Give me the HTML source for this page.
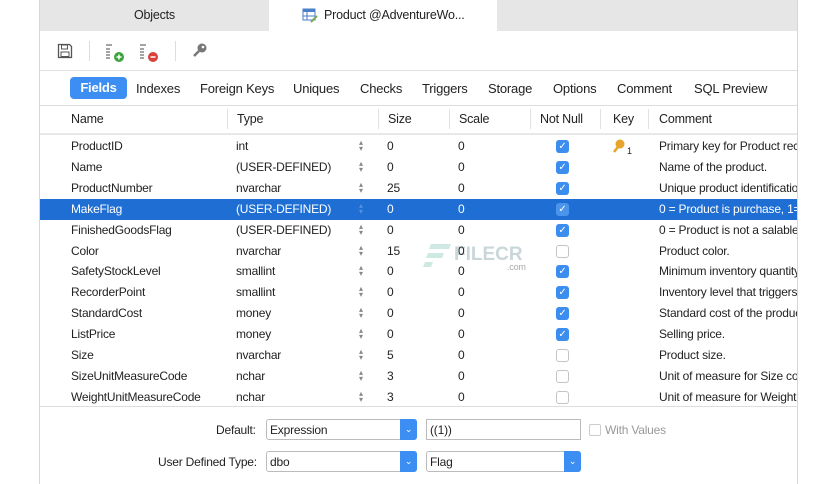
<!DOCTYPE html>
<html><head><meta charset="utf-8"><style>
*{margin:0;padding:0;box-sizing:border-box}
body{width:836px;height:484px;background:#fff;font-family:"Liberation Sans",sans-serif;font-size:12px;color:#222;position:relative;overflow:hidden;letter-spacing:-0.2px}
.a{position:absolute}
.win{position:absolute;left:39px;top:0;width:759px;height:484px;border-left:1px solid #d6d6d6;border-right:1px solid #d6d6d6;overflow:hidden}
.row{position:absolute;left:0;width:758px;height:21px}
.row span{position:absolute;top:3px;white-space:nowrap}
.sel{background:#1f6ed4;color:#fff}
.cb{position:absolute;left:516px;top:4px;width:13px;height:13px;border-radius:3px;background:#3b8df0;color:#fff;font-size:10px;line-height:13px;text-align:center}
.cb.e{background:#fff;border:1px solid #c4c4c4}
.sel .cb{background:#4a94ec}
.st{position:absolute;left:319px;top:4px;font-size:8px;line-height:6px;color:#888}
.sel .st{color:#5a8fd8}
.hd span{position:absolute;top:7px}
.sep{position:absolute;top:4px;width:1px;height:20px;background:#e2e2e2}
.sub span{position:absolute;top:10px;font-size:13px}
.sel2{border:1px solid #bbb;border-radius:3px;height:21px;background:#fff;position:absolute}
.dd{position:absolute;right:-1px;top:-1px;width:17px;height:21px;background:#3d8ef2;border-radius:0 3px 3px 0;color:#fff;font-size:9px;text-align:center;line-height:20px}
</style></head><body>
<div class="win">
 <div class="a" style="left:0;top:0;width:229px;height:31px;background:#e6e6e6;text-align:center;line-height:31px;font-size:12.5px">Objects</div>
 <div class="a" style="left:229px;top:0;width:228px;height:31px;background:#fff;line-height:31px;font-size:12.5px;padding-left:55px">Product @AdventureWo...</div>
 <svg class="a" style="left:262px;top:8px" width="16" height="15"><rect x="1" y="1" width="12" height="11" fill="#fff" stroke="#4a7fc9"/><rect x="1" y="1" width="12" height="3" fill="#4a7fc9"/><line x1="5" y1="4" x2="5" y2="12" stroke="#4a7fc9"/><line x1="1" y1="8" x2="13" y2="8" stroke="#4a7fc9"/><path d="M9 14 L15 8" stroke="#7a5" stroke-width="2"/></svg>
 <div class="a" style="left:457px;top:0;width:302px;height:31px;background:#e6e6e6"></div>
 <svg class="a" style="left:17px;top:43px" width="16" height="16"><path d="M1.5 1.5h11l2 2v11h-13z" fill="none" stroke="#555" stroke-width="1.3"/><rect x="4.5" y="2" width="6" height="4" fill="none" stroke="#555"/><rect x="4" y="9" width="8" height="4.5" fill="none" stroke="#555"/></svg>
 <div class="a" style="left:49px;top:41px;width:1px;height:20px;background:#ddd"></div>
 <svg class="a" style="left:65px;top:41px" width="22" height="22"><g stroke="#666" stroke-width="1.2"><line x1="1" y1="4" x2="7" y2="4"/><line x1="1" y1="8" x2="5" y2="8"/><line x1="1" y1="11" x2="5" y2="11"/><line x1="1" y1="14" x2="5" y2="14"/><line x1="1" y1="17" x2="5" y2="17"/></g><circle cx="14" cy="16" r="5" fill="#3ca33c"/><path d="M11.5 16h5M14 13.5v5" stroke="#fff" stroke-width="1.5"/></svg>
 <svg class="a" style="left:99px;top:41px" width="22" height="22"><g stroke="#666" stroke-width="1.2"><line x1="1" y1="4" x2="7" y2="4"/><line x1="1" y1="8" x2="5" y2="8"/><line x1="1" y1="11" x2="5" y2="11"/><line x1="1" y1="14" x2="5" y2="14"/><line x1="1" y1="17" x2="5" y2="17"/></g><circle cx="14" cy="16" r="5" fill="#d8423a"/><path d="M11.5 16h5" stroke="#fff" stroke-width="1.5"/></svg>
 <div class="a" style="left:135px;top:41px;width:1px;height:20px;background:#ddd"></div>
 <svg class="a" style="left:152px;top:42px" width="16" height="16"><circle cx="10" cy="6" r="4.5" fill="#777"/><circle cx="11" cy="5" r="1.3" fill="#fff"/><path d="M7 9 L2 14" stroke="#777" stroke-width="2.5"/></svg>
 <div class="a" style="left:0;top:70px;width:759px;height:1px;background:#e0e0e0"></div>
 <div class="sub">
 <div class="a" style="left:30px;top:77px;width:57px;height:22px;background:#3d8ef2;border-radius:4px;color:#fff;font-weight:bold;text-align:center;line-height:22px;font-size:13px">Fields</div>
 <span style="left:96px;top:81px">Indexes</span>
 <span style="left:160px;top:81px">Foreign Keys</span>
 <span style="left:253px;top:81px">Uniques</span>
 <span style="left:320px;top:81px">Checks</span>
 <span style="left:382px;top:81px">Triggers</span>
 <span style="left:448px;top:81px">Storage</span>
 <span style="left:513px;top:81px">Options</span>
 <span style="left:577px;top:81px">Comment</span>
 <span style="left:654px;top:81px">SQL Preview</span>
 </div>
 <div class="a" style="left:0;top:105px;width:759px;height:1px;background:#ddd"></div>
 <div class="a hd" style="left:0;top:105px;width:759px;height:28px;font-size:12.5px">
  <span style="left:31px">Name</span><div class="sep" style="left:187px"></div>
  <span style="left:197px">Type</span><div class="sep" style="left:338px"></div>
  <span style="left:348px">Size</span><div class="sep" style="left:409px"></div>
  <span style="left:419px">Scale</span><div class="sep" style="left:490px"></div>
  <span style="left:500px">Not Null</span><div class="sep" style="left:560px"></div>
  <span style="left:573px">Key</span><div class="sep" style="left:608px"></div>
  <span style="left:619px">Comment</span>
 </div>
 <div class="a" style="left:0;top:133px;width:759px;height:2px;background:#e8e8e8"></div>
 <svg class="a" style="left:383px;top:243px" width="30" height="28"><g fill="#cfe8e4"><path d="M8 1h20l-2 5H6z"/><path d="M5 10h16l-2 5H3z"/><path d="M2 19h8l-2 5H0z"/></g></svg>
 <div class="a" style="left:414px;top:244px;font-size:19px;font-weight:bold;color:#c9d7da;letter-spacing:0">FILECR</div>
 <div class="a" style="left:467px;top:262px;font-size:9px;color:#aaa">.com</div>
 <div id="rows"></div>
 <div class="a" style="left:0;top:406px;width:759px;height:1px;background:#ddd"></div>
 <div class="a" style="left:0;top:407px;width:759px;height:77px;background:#fff"></div>
 <div class="a" style="left:176px;top:423px">Default:</div>
 <div class="sel2" style="left:226px;top:419px;width:151px"><span class="a" style="left:3px;top:3px">Expression</span><div class="dd">⌄</div></div>
 <div class="a" style="left:386px;top:419px;width:155px;height:21px;border:1px solid #bbb;padding:3px 3px">((1))</div>
 <div class="a" style="left:549px;top:424px;width:12px;height:12px;border:1px solid #ccc;border-radius:2px"></div>
 <div class="a" style="left:565px;top:423px;color:#999">With Values</div>
 <div class="a" style="left:118px;top:455px">User Defined Type:</div>
 <div class="sel2" style="left:226px;top:451px;width:151px"><span class="a" style="left:3px;top:3px">dbo</span><div class="dd">⌄</div></div>
 <div class="sel2" style="left:386px;top:451px;width:155px"><span class="a" style="left:3px;top:3px">Flag</span><div class="dd">⌄</div></div>
</div>
<script>
var d=[["ProductID","int","0",1,"Primary key for Product records."],["Name","(USER-DEFINED)","0",1,"Name of the product."],["ProductNumber","nvarchar","25",1,"Unique product identification number."],["MakeFlag","(USER-DEFINED)","0",1,"0 = Product is purchase, 1= Product is manufactured"],["FinishedGoodsFlag","(USER-DEFINED)","0",1,"0 = Product is not a salable item"],["Color","nvarchar","15",0,"Product color."],["SafetyStockLevel","smallint","0",1,"Minimum inventory quantity."],["RecorderPoint","smallint","0",1,"Inventory level that triggers a purchase"],["StandardCost","money","0",1,"Standard cost of the product."],["ListPrice","money","0",1,"Selling price."],["Size","nvarchar","5",0,"Product size."],["SizeUnitMeasureCode","nchar","3",0,"Unit of measure for Size column."],["WeightUnitMeasureCode","nchar","3",0,"Unit of measure for Weight column."]];
var h="";d.forEach(function(r,i){h+='<div class="row'+(i==3?' sel':'')+'" style="top:'+(136+i*20.9)+'px"><span style="left:31px">'+r[0]+'</span><span style="left:196px">'+r[1]+'</span><div class="st">▴<br>▾</div><span style="left:347px">'+r[2]+'</span><span style="left:418px">0</span><div class="cb'+(r[3]?'':' e')+'">'+(r[3]?'✓':'')+'</div>'+(i==0?'<svg style="position:absolute;left:573px;top:2px" width="20" height="18"><circle cx="7" cy="6" r="4.5" fill="#e6a42a"/><path d="M5 9 L1 14" stroke="#e6a42a" stroke-width="2.6"/><text x="14" y="16" font-size="9" fill="#222">1</text></svg>':'')+'<span style="left:619px">'+r[4]+'</span></div>'});
document.getElementById("rows").innerHTML=h;
</script>
</body></html>
